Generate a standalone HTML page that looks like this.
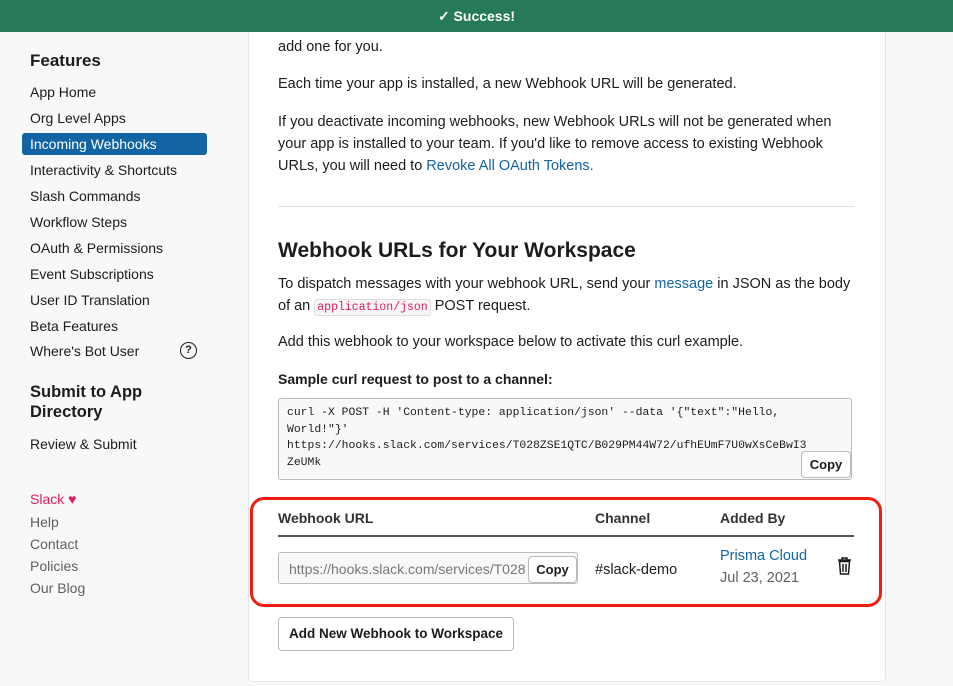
<!DOCTYPE html><html><head><style>
body{margin:0;width:953px;height:686px;overflow:hidden;background:#f8f8f8;font-family:"Liberation Sans",sans-serif;color:#1d1c1d;position:relative}
.a{position:absolute;white-space:nowrap}
.top{position:absolute;left:0;top:0;width:953px;height:32px;background:#267a58;color:#fff;font-size:14px;font-weight:bold;text-align:center;line-height:33px;z-index:3}
.side .a{font-size:14px;left:30px;color:#1d1c1d}
.card{position:absolute;left:248px;top:20px;width:636px;height:660px;background:#fff;border:1px solid #e6e6e6;border-radius:4px}
.t{font-size:14.5px;color:#1d1c1d;left:278px}
.lk{color:#1264a3}
.code{position:absolute;left:278px;top:398px;width:574px;height:82px;background:#f8f8f8;border:1px solid #bbb;border-radius:3px;font-family:"Liberation Mono",monospace;font-size:11.4px;line-height:16.7px;padding:6px 0 0 8px;box-sizing:border-box;color:#1d1c1d}
.btn{position:absolute;background:#fff;border:1px solid #bbb;border-radius:4px;font-size:13px;font-weight:bold;text-align:center}
.th{font-size:14px;font-weight:bold;color:#333}
</style></head><body>
<div class="top">&#x2713;&#xFE0E; Success!</div>
<div class="side">
<div class="a" style="top:51px;font-size:17px;font-weight:bold">Features</div>
<div class="a" style="top:84px">App Home</div>
<div class="a" style="top:110px">Org Level Apps</div>
<div class="a" style="left:22px;top:133px;width:185px;height:22px;background:#1264a3;border-radius:3px"></div>
<div class="a" style="top:136px;color:#fff">Incoming Webhooks</div>
<div class="a" style="top:162px">Interactivity &amp; Shortcuts</div>
<div class="a" style="top:188px">Slash Commands</div>
<div class="a" style="top:214px">Workflow Steps</div>
<div class="a" style="top:240px">OAuth &amp; Permissions</div>
<div class="a" style="top:266px">Event Subscriptions</div>
<div class="a" style="top:292px">User ID Translation</div>
<div class="a" style="top:318px">Beta Features</div>
<div class="a" style="top:343px">Where's Bot User</div>
<div class="a" style="left:180px;top:342px;width:15px;height:15px;border:1.5px solid #1d1c1d;border-radius:50%;font-size:11px;text-align:center;line-height:15px;font-weight:bold">?</div>
<div class="a" style="top:382px;font-size:16.5px;font-weight:bold;line-height:20px">Submit to App<br>Directory</div>
<div class="a" style="top:436px">Review &amp; Submit</div>
<div class="a" style="top:491px;color:#e01e5a">Slack &#x2665;</div>
<div class="a" style="top:514px;color:#616061">Help</div>
<div class="a" style="top:536px;color:#616061">Contact</div>
<div class="a" style="top:558px;color:#616061">Policies</div>
<div class="a" style="top:580px;color:#616061">Our Blog</div>
</div>
<div class="card"></div>
<div class="a t" style="top:39px">add one for you.</div>
<div class="a t" style="top:76px">Each time your app is installed, a new Webhook URL will be generated.</div>
<div class="a t" style="top:111px;line-height:22px">If you deactivate incoming webhooks, new Webhook URLs will not be generated when<br>your app is installed to your team. If you'd like to remove access to existing Webhook<br>URLs, you will need to <span class="lk">Revoke All OAuth Tokens.</span></div>
<div class="a" style="left:278px;top:206px;width:576px;border-top:1px solid #e2e2e2"></div>
<div class="a" style="left:278px;top:239px;font-size:21px;font-weight:bold">Webhook URLs for Your Workspace</div>
<div class="a t" style="top:273px;line-height:22px">To dispatch messages with your webhook URL, send your <span class="lk">message</span> in JSON as the body<br>of an <span style="font-family:'Liberation Mono',monospace;font-size:11.5px;color:#e01e5a;background:#f6f6f6;border:1px solid #ddd;padding:1px 2px;border-radius:3px">application/json</span> POST request.</div>
<div class="a t" style="top:334px">Add this webhook to your workspace below to activate this curl example.</div>
<div class="a t" style="top:371px;font-weight:bold;font-size:14px">Sample curl request to post to a channel:</div>
<div class="code">curl -X POST -H 'Content-type: application/json' --data '{"text":"Hello,<br>World!"}'<br>https://hooks.slack.com/services/T028ZSE1QTC/B029PM44W72/ufhEUmF7U0wXsCeBwI3<br>ZeUMk</div>
<div class="btn" style="left:801px;top:451px;width:48px;height:25px;line-height:25px">Copy</div>
<div class="a" style="left:250px;top:497px;width:626px;height:104px;border:3px solid #f01e10;border-radius:14px"></div>
<div class="a th" style="left:278px;top:510px">Webhook URL</div>
<div class="a th" style="left:595px;top:510px">Channel</div>
<div class="a th" style="left:720px;top:510px">Added By</div>
<div class="a" style="left:278px;top:535px;width:576px;border-top:2px solid #555"></div>
<div class="a" style="left:278px;top:552px;width:300px;height:32px;border:1px solid #bbb;border-radius:3px;background:#f8f8f8;overflow:hidden;font-size:14px;color:#777;line-height:32px;padding-left:10px;box-sizing:border-box">https://hooks.slack.com/services/T028</div>
<div class="btn" style="left:528px;top:556px;width:47px;height:25px;line-height:25px">Copy</div>
<div class="a" style="left:595px;top:562px;font-size:14.5px">#slack-demo</div>
<div class="a" style="left:720px;top:548px;font-size:14.5px;color:#1264a3">Prisma Cloud</div>
<div class="a" style="left:720px;top:570px;font-size:14.5px;color:#616061">Jul 23, 2021</div>
<svg class="a" style="left:837px;top:557px" width="15" height="18" viewBox="0 0 15 18"><path d="M1 3h13M5 3V1h5v2M2.5 4.5h10l-1 12.5h-8zM6 7v8M9 7v8" fill="none" stroke="#1d1c1d" stroke-width="1.5"/></svg>
<div class="btn" style="left:278px;top:617px;width:234px;height:32px;line-height:32px;font-size:13.5px">Add New Webhook to Workspace</div>
</body></html>
